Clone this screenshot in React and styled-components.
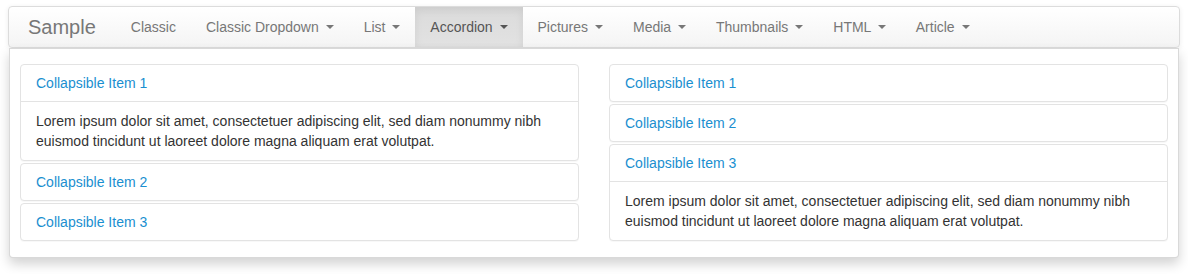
import React from "react";
import styled, { createGlobalStyle } from "styled-components";

const Global = createGlobalStyle`
  html, body { margin: 0; padding: 0; background: #fff; }
  body {
    font-family: "Liberation Sans", Arial, sans-serif;
    font-size: 14px;
    line-height: 20px;
    color: #333;
  }
  * { box-sizing: border-box; }
`;

const Page = styled.div`
  padding: 6px 8px 20px 8px;
`;

const NavWrap = styled.div`
  display: flex;
  flex-direction: column;
`;

const Navbar = styled.nav`
  display: flex;
  align-items: stretch;
  height: 42px;
  border: 1px solid #dcdcdc;
  border-radius: 4px;
  background-image: linear-gradient(to bottom, #ffffff 0%, #f4f4f4 100%);
  box-shadow: inset 0 1px 0 rgba(255, 255, 255, 0.15), 0 1px 5px rgba(0, 0, 0, 0.075);
`;

const Brand = styled.a`
  display: flex;
  align-items: center;
  padding: 0 20px 0 19px;
  font-size: 20px;
  line-height: 20px;
  color: #777;
  text-decoration: none;
`;

const NavList = styled.ul`
  display: flex;
  margin: 0;
  padding: 0;
  list-style: none;
`;

const NavItem = styled.li`
  display: flex;
`;

const NavLink = styled.a`
  display: flex;
  align-items: center;
  padding: 10px 15px;
  line-height: 20px;
  color: ${(p) => (p.$active ? "#555" : "#777")};
  text-decoration: none;
  white-space: pre;
  background-image: ${(p) =>
    p.$active ? "linear-gradient(to bottom, #dbdbdb 0%, #e2e2e2 100%)" : "none"};
  box-shadow: ${(p) => (p.$active ? "inset 0 3px 9px rgba(0,0,0,0.075)" : "none")};
`;

const Caret = styled.b`
  display: inline-block;
  width: 0;
  height: 0;
  margin-left: 3px;
  border-top: 4px solid currentColor;
  border-left: 4px solid transparent;
  border-right: 4px solid transparent;
  vertical-align: middle;
`;

const Dropdown = styled.div`
  position: relative;
  z-index: 2;
  margin: 0 1px;
  display: grid;
  grid-template-columns: 1fr 1fr;
  column-gap: 30px;
  align-items: start;
  padding: 15px 10px 16px;
  background: #fff;
  border: 1px solid rgba(0, 0, 0, 0.15);
  border-radius: 0 0 4px 4px;
  box-shadow: 0 6px 12px rgba(0, 0, 0, 0.175);
`;

const Accordion = styled.div`
  display: flex;
  flex-direction: column;
  gap: 2px;
`;

const Panel = styled.div`
  border: 1px solid #e3e3e3;
  border-radius: 4px;
  background: #fff;
  box-shadow: 0 1px 1px rgba(0, 0, 0, 0.03);
`;

const PanelHeading = styled.div`
  padding: 8px 15px;
  line-height: 20px;
  border-bottom: ${(p) => (p.$open ? "1px solid #e3e3e3" : "none")};
`;

const PanelTitle = styled.a`
  color: #1a8fd0;
  text-decoration: none;
  font-size: 14px;
`;

const PanelBody = styled.div`
  padding: 9px 15px 9px;
  color: #333;
  line-height: 20px;
`;

const LOREM =
  "Lorem ipsum dolor sit amet, consectetuer adipiscing elit, sed diam nonummy nibh euismod tincidunt ut laoreet dolore magna aliquam erat volutpat.";

const items = [
  { label: "Classic" },
  { label: "Classic Dropdown", caret: true },
  { label: "List", caret: true },
  { label: "Accordion", caret: true, active: true },
  { label: "Pictures", caret: true },
  { label: "Media", caret: true },
  { label: "Thumbnails", caret: true },
  { label: "HTML", caret: true },
  { label: "Article", caret: true },
];

function AccordionColumn({ open }) {
  return (
    <Accordion>
      {[1, 2, 3].map((n) => (
        <Panel key={n}>
          <PanelHeading $open={open === n}>
            <PanelTitle href="#">Collapsible Item {n}</PanelTitle>
          </PanelHeading>
          {open === n && <PanelBody>{LOREM}</PanelBody>}
        </Panel>
      ))}
    </Accordion>
  );
}

export default function App() {
  return (
    <>
      <Global />
      <Page>
        <NavWrap>
          <Navbar>
            <Brand href="#">Sample</Brand>
            <NavList>
              {items.map((it) => (
                <NavItem key={it.label}>
                  <NavLink href="#" $active={it.active}>
                    {it.label}
                    {it.caret && " "}
                    {it.caret && <Caret />}
                  </NavLink>
                </NavItem>
              ))}
            </NavList>
          </Navbar>
          <Dropdown>
            <AccordionColumn open={1} />
            <AccordionColumn open={3} />
          </Dropdown>
        </NavWrap>
      </Page>
    </>
  );
}
